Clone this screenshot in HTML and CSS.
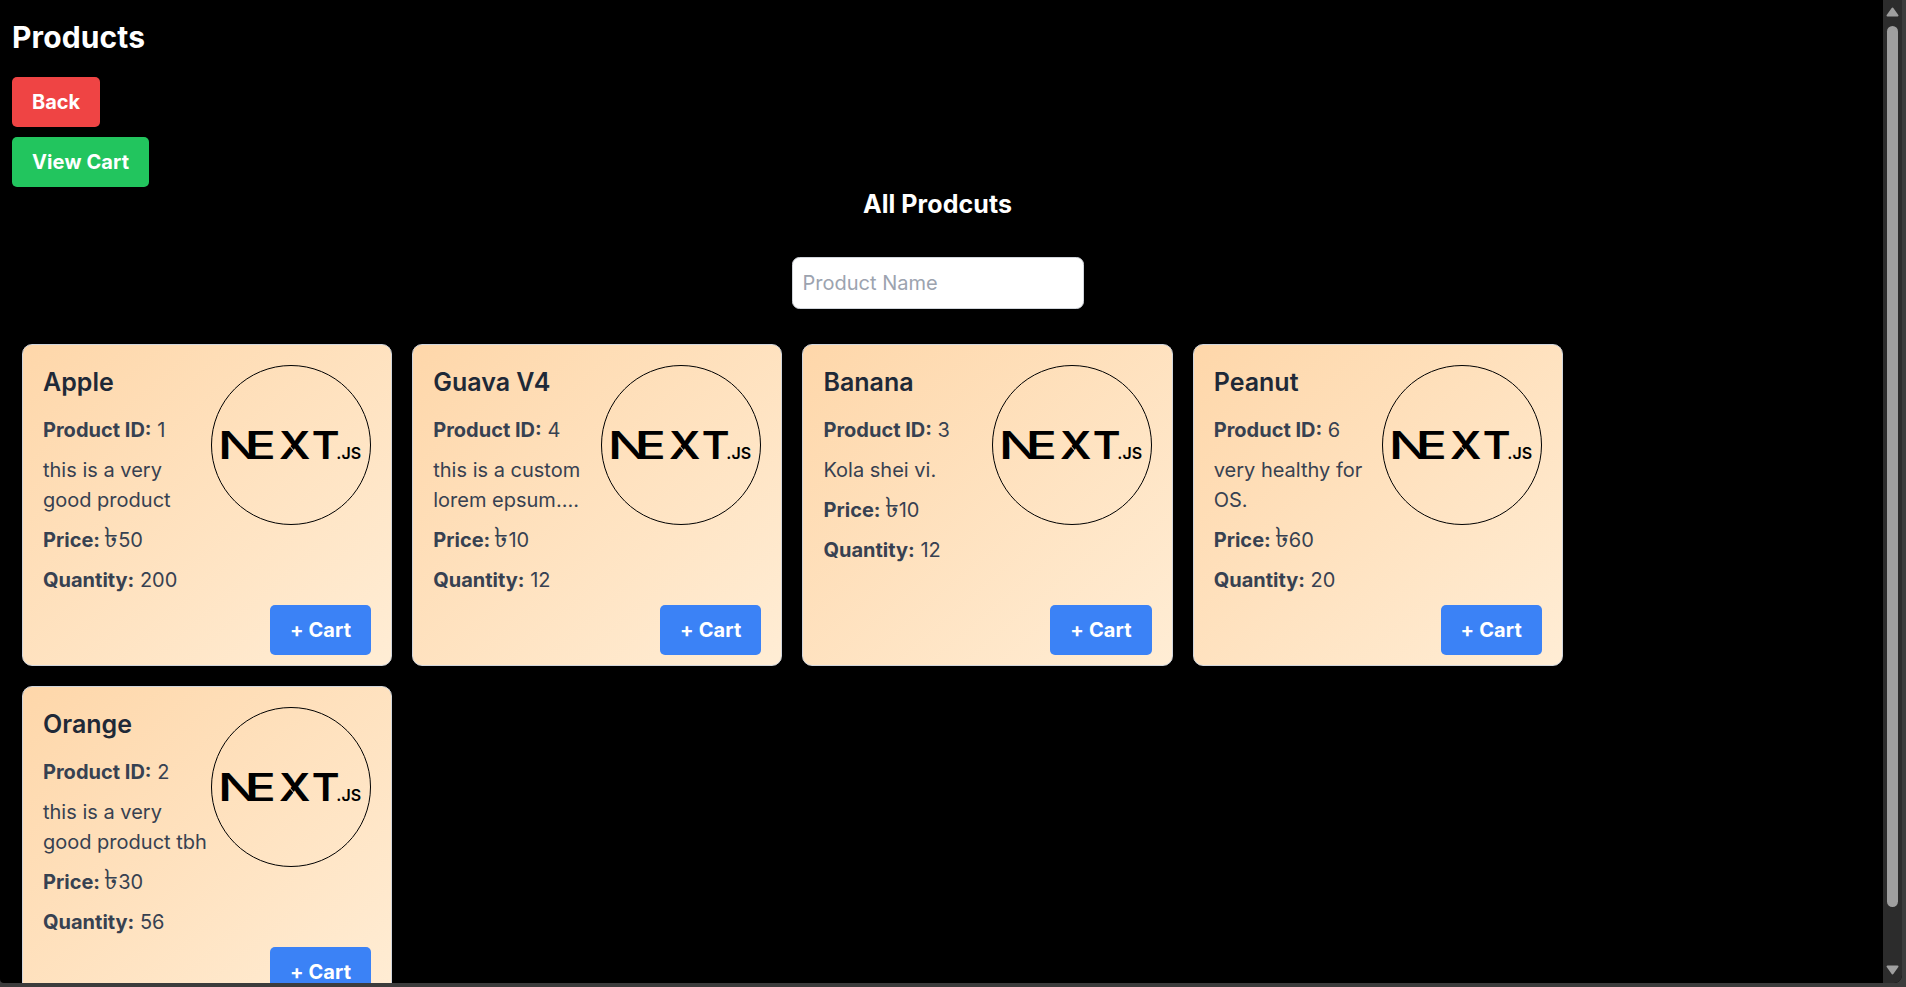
FILE: index.html
```html
<!DOCTYPE html>
<html lang="en">
<head>
<meta charset="utf-8">
<title>Products</title>
<link rel="stylesheet" href="styles.css">
</head>
<body>
<div class="window">
  <main class="page">
    <h1 class="page-title">Products</h1>
    <div class="actions">
      <button class="btn btn-red">Back</button>
      <button class="btn btn-green">View Cart</button>
    </div>
    <h2 class="list-title">All Prodcuts</h2>
    <input class="search" type="text" placeholder="Product Name">
    <section class="grid" id="grid"></section>
  </main>
  <div class="scrollbar">
    <svg width="13" height="10" viewBox="0 0 13 10"><path d="M6.5 1.5L11.5 8.5H1.5Z"/></svg>
    <div class="thumb"></div>
    <svg width="13" height="10" viewBox="0 0 13 10"><path d="M6.5 8.5L1.5 1.5H11.5Z"/></svg>
  </div>
</div>
<script src="app.js"></script>
</body>
</html>
```
FILE: app.js
```js
const products = [
  { id: 1, name: "Apple", text: "this is a very good product", price: 50, quantity: 200 },
  { id: 4, name: "Guava V4", text: "this is a custom lorem epsum....", price: 10, quantity: 12 },
  { id: 3, name: "Banana", text: "Kola shei vi.", price: 10, quantity: 12 },
  { id: 6, name: "Peanut", text: "very healthy for OS.", price: 60, quantity: 20 },
  { id: 2, name: "Orange", text: "this is a very good product tbh", price: 30, quantity: 56 },
];

const logo = `
  <svg class="logo" viewBox="0 0 160 160">
    <circle cx="80" cy="80" r="79.5" fill="none" stroke="#000"/>
    <g class="wordmark">
      <text class="n" transform="translate(6.6 94) scale(1.46 1)">N</text>
      <text transform="translate(34.6 94) scale(1.33 1)">E</text>
      <text class="x" transform="translate(68 94) scale(1.15 1)">X</text>
      <text class="x" transform="translate(100.8 94) scale(1.11 1)">T</text>
      <text class="js" x="125.3" y="94">.JS</text>
    </g>
    <path d="M77.5 79.5l6.5 7.5" stroke="#fee0bd" stroke-width="1"/>
  </svg>`;

document.getElementById("grid").innerHTML = products.map(p => `
  <article class="card">
    <div class="body">
      <div class="info">
        <h3>${p.name}</h3>
        <p><b>Product ID:</b> ${p.id}</p>
        <p>${p.text}</p>
        <p><b>Price:</b> <span class="taka">৳</span>${p.price}</p>
        <p><b>Quantity:</b> ${p.quantity}</p>
      </div>
      ${logo}
    </div>
    <button class="btn btn-blue">+ Cart</button>
  </article>`).join("");
```
FILE: styles.css
```css
* { box-sizing: border-box; margin: 0; }
body {
  height: 987px;
  overflow: hidden;
  background: #3c3c3c;
  color: #fff;
  font: 400 20px/30px Inter, "Noto Sans", sans-serif;
}
.window {
  display: flex;
  width: 1902px;
  height: 983px;
  overflow: hidden;
  background: #000;
  border-radius: 0 0 8px 4px;
}
.page { flex: 1; padding: 15px 20px 0 12px; }
.page-title { font-size: 30px; line-height: 45px; font-weight: 700; letter-spacing: 0.13px; }
.actions {
  display: flex;
  flex-direction: column;
  align-items: flex-start;
  gap: 10px;
  margin-top: 17px;
}
.btn {
  height: 50px;
  padding: 10px 20px;
  border: 0;
  border-radius: 5px;
  color: #fff;
  font: 700 20px/30px Inter, sans-serif;
  letter-spacing: 0.13px;
}
.btn-red { background: #ef4444; letter-spacing: 0; }
.btn-green { background: #22c55e; }
.btn-blue { background: #3b82f6; align-self: flex-end; margin-top: auto; }
.list-title { font-size: 25px; line-height: 35px; font-weight: 700; text-align: center; letter-spacing: 0.08px; }
.search {
  display: block;
  width: 292px;
  height: 52px;
  margin: 35px auto;
  padding: 10px;
  border: 1px solid #d1d5db;
  border-radius: 7.5px;
  background: #fff;
  font: 400 20px/30px Inter, sans-serif;
}
.search::placeholder { color: #9ca3af; opacity: 1; }
.grid {
  display: grid;
  grid-template-columns: repeat(4, 370.24px);
  grid-auto-rows: 322px;
  gap: 20px;
  padding-left: 10px;
}
.card {
  display: flex;
  flex-direction: column;
  padding: 20px 20px 10px;
  border: 1px solid #d1d5db;
  border-radius: 10px;
  background: linear-gradient(to bottom right, #fed7aa, #ffedd5);
  color: #374151;
}
.body { display: flex; }
.info { flex: 1; min-width: 0; }
.info h3 {
  margin-bottom: 15px;
  color: #1f2937;
  font-size: 25px;
  line-height: 35px;
  font-weight: 600;
}
.info p + p { margin-top: 10px; }
.taka { margin-left: -1.5px; font-size: 28px; line-height: 0; font-weight: 300; }
.logo { flex: none; width: 160px; height: 160px; }
.wordmark { font: 500 38px Inter, sans-serif; fill: #000; }
.wordmark .n { font-weight: 500; }
.wordmark .x { font-weight: 600; }
.wordmark .js { font-size: 16px; font-weight: 600; }
.scrollbar {
  display: flex;
  flex-direction: column;
  align-items: center;
  width: 19px;
  padding: 7px 0 8px;
  background: #2c2c2c;
}
.scrollbar svg { flex: none; fill: #9f9f9f; stroke: #9f9f9f; stroke-width: 2; stroke-linejoin: round; }
.thumb { width: 11px; height: 881px; margin: 9px 0 auto; border-radius: 6px; background: #9f9f9f; }
```
